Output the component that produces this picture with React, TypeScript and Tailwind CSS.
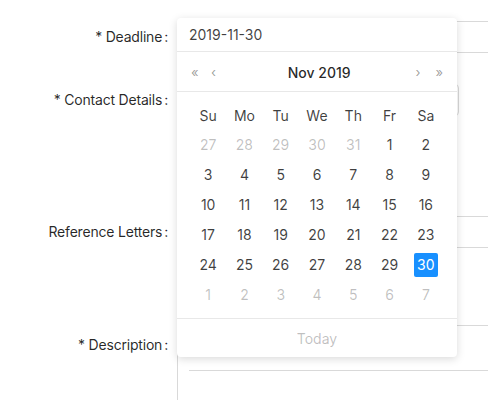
import React from "react";

const weekDays = ["Su", "Mo", "Tu", "We", "Th", "Fr", "Sa"];

interface Cell {
  day: number;
  muted: boolean;
  selected: boolean;
}

function buildWeeks(): Cell[][] {
  const cells: Cell[] = [];
  for (let d = 27; d <= 31; d++) cells.push({ day: d, muted: true, selected: false });
  for (let d = 1; d <= 30; d++) cells.push({ day: d, muted: false, selected: d === 30 });
  for (let d = 1; d <= 7; d++) cells.push({ day: d, muted: true, selected: false });
  const weeks: Cell[][] = [];
  for (let i = 0; i < cells.length; i += 7) weeks.push(cells.slice(i, i + 7));
  return weeks;
}

function Label({ text, required }: { text: string; required?: boolean }) {
  return (
    <div className="w-[177px] shrink-0 text-right pr-[9px] leading-10 text-[14px] tracking-[-0.2px] text-black/85">
      {required && "* "}
      {text}
      <span className="ml-[2px]">:</span>
    </div>
  );
}

function Calendar() {
  const weeks = buildWeeks();
  return (
    <div className="absolute left-[177px] top-[18px] w-[280px] bg-white rounded-[4px] shadow-[0_2px_8px_rgba(0,0,0,0.15)] text-[14px]">
      <div className="h-[34px] px-[12px] flex items-center border-b border-[#e8e8e8] text-black/75">
        2019-11-30
      </div>
      <div className="h-[40px] flex items-center border-b border-[#e8e8e8] px-[14px] pt-[2px] text-black/40">
        <span className="w-[20px] text-[13px]">«</span>
        <span className="w-[12px] text-[13px]">‹</span>
        <span className="flex-1 text-center font-medium text-black/85">Nov 2019</span>
        <span className="w-[20px] text-[13px]">›</span>
        <span className="text-[13px]">»</span>
      </div>
      <div className="px-[13px] py-[8px]">
        <div className="grid grid-cols-7 h-[30px] items-center text-center text-black/75">
          {weekDays.map((w) => (
            <div key={w}>{w}</div>
          ))}
        </div>
        {weeks.map((week, i) => (
          <div key={i} className="grid grid-cols-7 h-[30px] items-center">
            {week.map((c, j) => (
              <div key={j} className="flex justify-center">
                <div
                  className={
                    c.selected
                      ? "w-[24px] h-[24px] leading-[24px] text-center rounded-[2px] bg-[#1890ff] text-white"
                      : c.muted
                      ? "w-[24px] h-[24px] leading-[24px] text-center text-black/25"
                      : "w-[24px] h-[24px] leading-[24px] text-center text-black/75"
                  }
                >
                  {c.day}
                </div>
              </div>
            ))}
          </div>
        ))}
      </div>
      <div className="h-[39px] border-t border-[#e8e8e8] flex items-center justify-center text-black/25">
        Today
      </div>
    </div>
  );
}

export default function App() {
  return (
    <div className="relative w-[488px] h-[400px] overflow-hidden bg-white font-['Inter',sans-serif]">
      <div className="pt-[17px]">
        <div className="flex h-[40px] mb-[23px]">
          <Label text="Deadline" required />
          <div className="flex-1 pt-[4px]">
            <div className="h-[32px] w-[400px] border border-[#d9d9d9] rounded-[4px]" />
          </div>
        </div>
        <div className="flex h-[108px] mb-[24px]">
          <Label text="Contact Details" required />
          <div className="flex-1 pt-[4px]">
            <div className="h-[32px] w-[282px] border border-[#d9d9d9] rounded-[4px]" />
          </div>
        </div>
        <div className="flex h-[89px] mb-[24px]">
          <Label text="Reference Letters" />
          <div className="flex-1 pt-[4px]">
            <div className="h-[32px] w-[400px] border border-[#d9d9d9] rounded-[4px]" />
          </div>
        </div>
        <div className="flex h-[120px]">
          <Label text="Description" required />
          <div className="flex-1">
            <div className="h-[120px] w-[400px] border-t border-l border-[#d9d9d9]">
              <div className="ml-[11px] h-[45px] border-b border-[#d9d9d9]" />
            </div>
          </div>
        </div>
      </div>
      <Calendar />
    </div>
  );
}
